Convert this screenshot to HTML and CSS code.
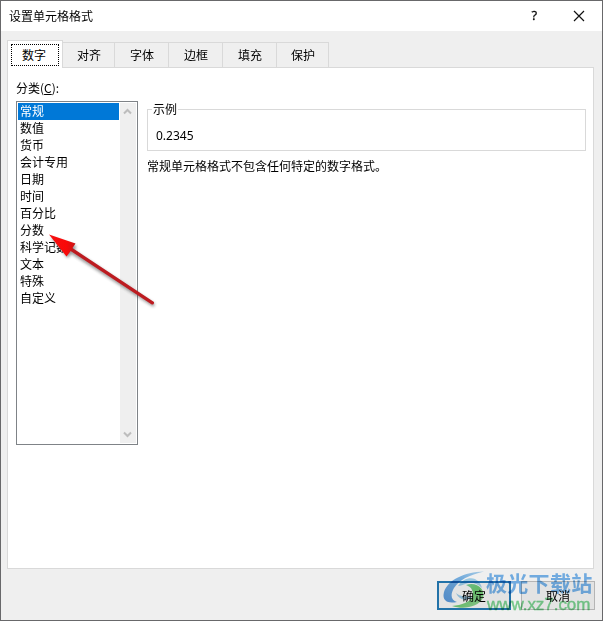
FILE: index.html
```
<!DOCTYPE html>
<html lang="zh-CN">
<head>
<meta charset="utf-8">
<title>设置单元格格式</title>
<link rel="stylesheet" href="styles.css">
</head>
<body>
<div class="dialog">
  <header class="titlebar">
    <h1>设置单元格格式</h1>
    <span class="help">?</span>
    <svg class="close" width="12" height="12" viewBox="0 0 12 12"><path d="M1 1L11 11M11 1L1 11" stroke="#111" stroke-width="1.2" fill="none"/></svg>
  </header>
  <nav class="tabs">
    <div class="tab active"><span>数字</span></div>
    <div class="tab narrow">对齐</div>
    <div class="tab">字体</div>
    <div class="tab">边框</div>
    <div class="tab">填充</div>
    <div class="tab narrow">保护</div>
  </nav>
  <main class="panel">
    <section class="category">
      <label class="caption">分类(<u>C</u>):</label>
      <div class="listbox">
        <ul>
          <li class="selected">常规</li>
          <li>数值</li>
          <li>货币</li>
          <li>会计专用</li>
          <li>日期</li>
          <li>时间</li>
          <li>百分比</li>
          <li>分数</li>
          <li>科学记数</li>
          <li>文本</li>
          <li>特殊</li>
          <li>自定义</li>
        </ul>
        <div class="scrollbar">
          <svg width="9" height="7" viewBox="0 0 9 7"><path d="M1 5.500L4.500 2L8 5.500" fill="none" stroke="#bdbdbd" stroke-width="2"/></svg>
          <svg width="9" height="7" viewBox="0 0 9 7"><path d="M1 1.500L4.500 5L8 1.500" fill="none" stroke="#bdbdbd" stroke-width="2"/></svg>
        </div>
      </div>
    </section>
    <section class="detail">
      <div class="sample"><span class="legend">示例</span><span class="value">0.2345</span></div>
      <p>常规单元格格式不包含任何特定的数字格式。</p>
    </section>
  </main>
  <footer class="actions">
    <button class="ok">确定</button>
    <button>取消</button>
  </footer>
  <svg class="arrow" width="120" height="90" viewBox="44 227 120 90">
    <defs>
      <filter id="soft" x="-20%" y="-20%" width="140%" height="140%"><feGaussianBlur stdDeviation="1.5"/></filter>
      <linearGradient id="head" x1="0" y1="0" x2="1" y2="0"><stop offset="0" stop-color="#f51010"/><stop offset=".65" stop-color="#f90808"/><stop offset="1" stop-color="#c51616"/></linearGradient>
    </defs>
    <g transform="translate(1.5 2)" opacity=".45" filter="url(#soft)">
      <path d="M49 235L75 244L73 248.500L153.500 302L152 305L70 252L66 256Z" fill="#222"/>
    </g>
    <path d="M70 248.500L152.300 302.800" stroke="#bd1b20" stroke-width="3.400" stroke-linecap="round"/>
    <path d="M49 234.500L75.500 243.500L72.500 248L70 252L66.500 256.500Z" fill="url(#head)"/>
  </svg>
  <div class="watermark">
    <svg width="48" height="40" viewBox="440 570 48 40">
      <defs>
        <linearGradient id="blue" x1="0" y1="1" x2="1" y2="0"><stop offset="0" stop-color="#5a9be0"/><stop offset=".6" stop-color="#7ab6ea"/><stop offset="1" stop-color="#b4daf4"/></linearGradient>
        <linearGradient id="green" x1="0" y1="0" x2="1" y2="1"><stop offset="0" stop-color="#86d8b8"/><stop offset=".5" stop-color="#6fd075"/><stop offset="1" stop-color="#a0dca0"/></linearGradient>
      </defs>
      <path d="M484 571.500C464 572 448 580 444 592C442 600 446 604 457 602C451 600 450 595 454 588C459 580 469 575 484 571.500Z" fill="url(#blue)"/>
      <path d="M458 586C462 579 470 577 475 579C479 581 481 584 482 588C478 584 473 582 468 583C464 584 461 586 458 586Z" fill="#a5d6f0"/>
      <path d="M466 585C476 581 486 589 483 598C478 607 464 610 452 606C462 605 470 602 472 597C474 592 472 587 466 585Z" fill="url(#green)"/>
      <path d="M456 593C460 597 466 596 472 597C467 602 459 600 456 593Z" fill="#9fcfee"/>
    </svg>
    <div class="brand"><b>极光下载站</b><span>www.xz7.com</span></div>
  </div>
</div>
</body>
</html>
```
FILE: styles.css
```
* { box-sizing: border-box; }
body { margin: 0; font: 12px/17px "Noto Sans CJK SC", sans-serif; color: #000; }
.dialog {
  position: relative; width: 603px; height: 621px;
  display: flex; flex-direction: column;
  border: 1px solid #68686a; background: #efefef;
}
.titlebar { height: 30px; background: #fff; display: flex; align-items: center; padding: 0 17px 2px 8px; }
h1 { margin: 0; font-size: 12px; font-weight: 400; flex: 1; }
.help { font: 13px/28px "Open Sans", sans-serif; margin-right: 36px; -webkit-text-stroke: .3px #000; }
.close { display: block; margin-top: 1px; }
.tabs { height: 36px; padding: 9px 0 0 6px; display: flex; align-items: flex-end; }
.tab {
  width: 54px; height: 25px; border: 1px solid #d9d9d9; border-width: 1px 1px 0 0;
  text-align: center; line-height: 24px; padding-left: 1px;
}
.tab.narrow { width: 52px; }
.tab.active {
  width: 56px; height: 28px; margin-bottom: -1px; border-left-width: 1px;
  background: #fff; padding: 3px; position: relative; z-index: 1;
}
.tab.active span { display: block; height: 22px; line-height: 19px; padding-right: 2px; border: 1px dotted #000; }
.panel {
  height: 502px; width: 587px; margin-left: 6px; background: #fff;
  border: 1px solid #d9d9d9; display: flex; padding: 11px 7px 0 8px;
}
.category { width: 122px; }
.caption { display: block; height: 22px; line-height: 17px; }
.caption u { text-underline-offset: 1px; }
.listbox { width: 122px; height: 344px; border: 1px solid #7f8387; padding: 1px; display: flex; justify-content: space-between; }
ul { list-style: none; margin: 0; padding: 0; width: 101px; }
li { height: 17px; line-height: 15px; padding-left: 2px; white-space: nowrap; }
.selected { background: #0078d7; color: #fff; }
.scrollbar {
  width: 16px; background: #efefef; display: flex; flex-direction: column;
  justify-content: space-between; align-items: flex-start; padding: 5px 0 5px 3px;
}
.detail { width: 439px; margin-left: 9px; padding-top: 30px; }
.sample { position: relative; height: 42px; border: 1px solid #d9d9d9; padding: 16px 0 0 8px; }
.legend { position: absolute; left: 4px; top: -10px; background: #fff; padding: 0 1px; }
.value { font-family: "Noto Sans", sans-serif; }
.detail p { margin: 6px 0 0; }
.actions { display: flex; justify-content: flex-end; padding: 12px 7px 0; gap: 10px; }
button { width: 74px; height: 29px; border: 1px solid #b5b5b5; background: #e3e3e3; padding: 0 0 1px; color: #000; font: inherit; }
.ok { border: 2px solid #2272a8; }
.arrow { position: absolute; left: 43px; top: 226px; }
.watermark { position: absolute; left: 439px; top: 569px; display: flex; mix-blend-mode: multiply; }
.brand { display: flex; flex-direction: column; margin-left: -2px; white-space: nowrap; }
.brand b { font-size: 21px; line-height: 25px; color: #78b6ee; letter-spacing: .3px; }
.brand span { font: 17px/18px "Liberation Sans", sans-serif; color: #7cd692; -webkit-text-stroke: .4px #7cd692; letter-spacing: -.05px; margin: 1px 0 0 1px; }
```
